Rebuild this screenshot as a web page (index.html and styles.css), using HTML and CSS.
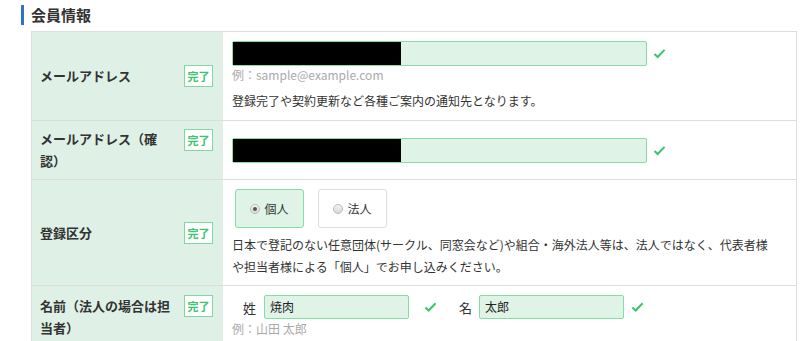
FILE: index.html
```html
<!DOCTYPE html>
<html lang="ja">
<head>
<meta charset="utf-8">
<link rel="stylesheet" href="styles.css">
</head>
<body>
<h2 class="heading">会員情報</h2>
<div class="form">
  <div class="row row-mail">
    <div class="label"><span class="label-text">メールアドレス</span><span class="badge">完了</span></div>
    <div class="value">
      <div class="field-line">
        <div class="input input-wide"><span class="mask"></span></div>
        <svg class="check" viewBox="0 0 14 12"><path d="M1.5 6.5 L5 9.8 L12.5 2"/></svg>
      </div>
      <div class="example">例：sample@example.com</div>
      <div class="note">登録完了や契約更新など各種ご案内の通知先となります。</div>
    </div>
  </div>
  <div class="row row-confirm">
    <div class="label"><span class="label-text">メールアドレス（確認）</span><span class="badge">完了</span></div>
    <div class="value value-center">
      <div class="field-line">
        <div class="input input-wide"><span class="mask"></span></div>
        <svg class="check" viewBox="0 0 14 12"><path d="M1.5 6.5 L5 9.8 L12.5 2"/></svg>
      </div>
    </div>
  </div>
  <div class="row row-type">
    <div class="label"><span class="label-text">登録区分</span><span class="badge">完了</span></div>
    <div class="value">
      <div class="radios">
        <div class="radio radio-on"><span class="dot dot-on"></span>個人</div>
        <div class="radio"><span class="dot"></span>法人</div>
      </div>
      <div class="desc">日本で登記のない任意団体(サークル、同窓会など)や組合・海外法人等は、法人ではなく、代表者様や担当者様による「個人」でお申し込みください。</div>
    </div>
  </div>
  <div class="row row-name">
    <div class="label"><span class="label-text">名前（法人の場合は担当者）</span><span class="badge">完了</span></div>
    <div class="value">
      <div class="name-line">
        <span class="name-label">姓</span>
        <div class="input input-name">焼肉</div>
        <svg class="check check-first" viewBox="0 0 14 12"><path d="M1.5 6.5 L5 9.8 L12.5 2"/></svg>
        <span class="name-label name-label-2">名</span>
        <div class="input input-name">太郎</div>
        <svg class="check check-second" viewBox="0 0 14 12"><path d="M1.5 6.5 L5 9.8 L12.5 2"/></svg>
      </div>
      <div class="example">例：山田 太郎</div>
    </div>
  </div>
</div>
</body>
</html>
```

FILE: styles.css
```css
html, body {
  margin: 0;
  padding: 0;
  background: #fff;
}
body {
  font-family: "Noto Sans CJK JP", "Noto Sans", sans-serif;
  color: #333;
  width: 800px;
  height: 341px;
  overflow: hidden;
}
.heading {
  margin: 5px 0 6px 21px;
  height: 20px;
  border-left: 3px solid #2f74c0;
  padding-left: 7px;
  font-size: 15px;
  line-height: 20px;
  font-weight: bold;
  color: #333;
}
.form {
  margin-left: 31px;
  width: 764px;
  border-top: 1px solid #ddd;
  border-left: 1px solid #ddd;
  border-right: 1px solid #ddd;
}
.row {
  display: flex;
  border-bottom: 1px solid #ddd;
}
.row-mail { height: 88px; }
.row-confirm { height: 58px; }
.row-type { height: 105px; }
.row-name { height: 80px; }
.label {
  width: 191px;
  box-sizing: border-box;
  background: #dff1e6;
  border-right: 1px solid #e6ece8;
  padding: 0 9px 0 8px;
  display: flex;
  align-items: center;
  gap: 12px;
  font-size: 13px;
  font-weight: bold;
  line-height: 22px;
}
.label-text {
  flex: 1;
}
.row-confirm .badge { margin-top: -20px; }
.row-name .label { align-items: flex-start; padding-top: 9px; }
.badge {
  width: 29px;
  height: 22px;
  box-sizing: border-box;
  border: 1px solid #7ed9a0;
  background: #fff;
  color: #3cc46e;
  font-size: 11px;
  line-height: 20px;
  text-align: center;
  font-weight: bold;
}
.value {
  flex: 1;
  padding: 9px 0 0 9px;
}
.value-center {
  display: flex;
  align-items: center;
  padding-top: 0;
}
.field-line {
  display: flex;
  align-items: center;
}
.input {
  box-sizing: border-box;
  height: 25px;
  border: 1px solid #86dca6;
  border-radius: 2px;
  background: #dff3e7;
  font-size: 12px;
  line-height: 23px;
  padding-left: 5px;
  color: #222;
}
.input-wide {
  width: 415px;
  padding-left: 0;
  display: flex;
  align-items: center;
}
.mask {
  display: block;
  width: 168px;
  height: 23px;
  background: #000;
}
.check {
  width: 13px;
  height: 11px;
  margin-left: 6px;
  fill: none;
  stroke: #3cc46e;
  stroke-width: 2.2;
}
.example {
  font-size: 12px;
  color: #aaa;
  line-height: 16px;
  margin-top: 1px;
}
.note {
  font-size: 12px;
  line-height: 20px;
  margin-top: 8px;
}
.radios {
  display: flex;
  gap: 14px;
  margin-left: 3px;
}
.radio {
  width: 69px;
  height: 39px;
  box-sizing: border-box;
  border: 1px solid #ddd;
  border-radius: 3px;
  background: #fff;
  display: flex;
  align-items: center;
  justify-content: center;
  gap: 4px;
  font-size: 12px;
}
.radio-on {
  border-color: #86dca6;
  background: #dff3e7;
}
.dot {
  width: 10px;
  height: 10px;
  box-sizing: border-box;
  border-radius: 50%;
  border: 1px solid #bbb;
  background: linear-gradient(#f4f4f4, #d8d8d8);
  position: relative;
}
.dot-on::after {
  content: "";
  position: absolute;
  left: 2px;
  top: 2px;
  width: 4px;
  height: 4px;
  border-radius: 50%;
  background: #555;
}
.desc {
  font-size: 12px;
  line-height: 22px;
  margin-top: 6px;
  width: 545px;
}
.name-line {
  display: flex;
  align-items: center;
}
.name-label {
  font-size: 13px;
  margin-left: 11px;
  margin-right: 8px;
}
.name-label-2 {
  margin-left: 22px;
  margin-right: 7px;
}
.input-name {
  width: 145px;
  height: 24px;
  line-height: 22px;
}
.check-first {
  margin-left: 15px;
  width: 13px;
  height: 12px;
}
.check-second {
  margin-left: 7px;
  width: 13px;
  height: 12px;
}
.row-name .example { margin-top: 2px; }
```
